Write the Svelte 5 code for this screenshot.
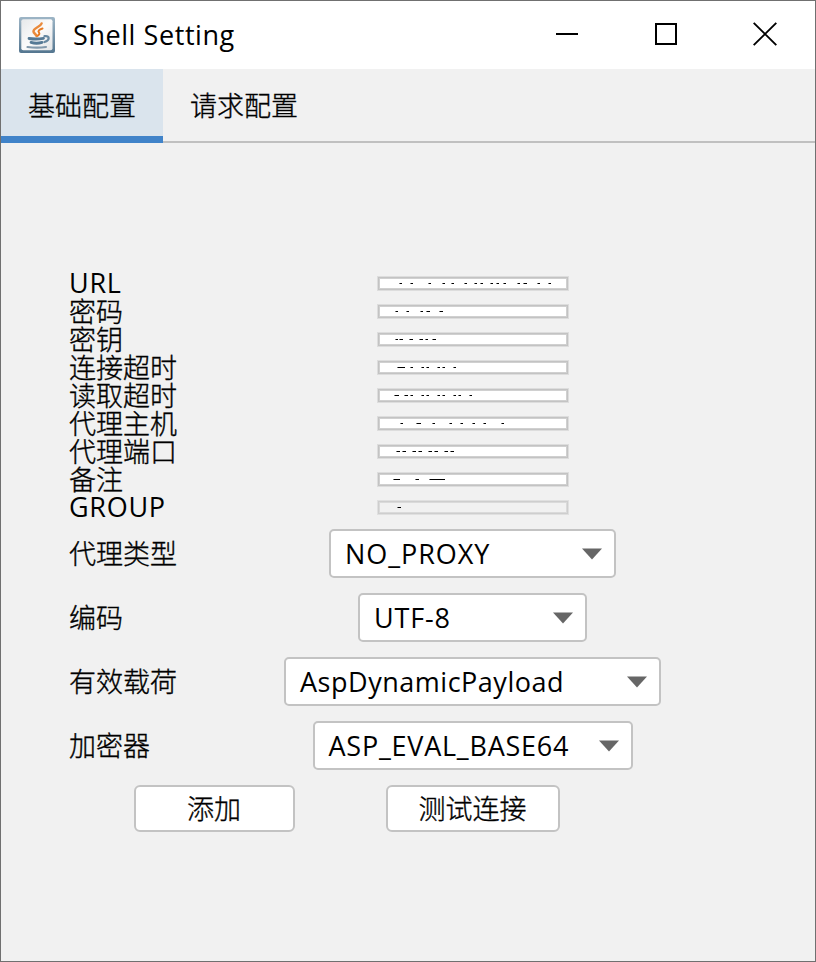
<script>
  const tabs = ['基础配置', '请求配置'];

  // Each mark is [offset, length] in pixels inside the collapsed text field.
  const fields = [
    { label: 'URL', latin: true, marks: [[19, 3], [30, 3], [48, 3], [62, 3], [71, 3], [84, 3], [94, 3], [100, 3], [110, 3], [116, 3], [123, 3], [137, 3], [143, 4], [157, 3], [168, 3]] },
    { label: '密码', marks: [[15, 3], [26, 3], [40, 3], [46, 4], [59, 4]] },
    { label: '密钥', marks: [[15, 3], [19, 4], [29, 4], [39, 4], [45, 3], [52, 4]] },
    { label: '连接超时', marks: [[17, 8], [30, 3], [41, 3], [46, 3], [57, 3], [62, 3], [73, 3]] },
    { label: '读取超时', marks: [[14, 5], [24, 4], [30, 3], [41, 3], [46, 3], [57, 3], [62, 3], [73, 3], [78, 3], [89, 3]] },
    { label: '代理主机', marks: [[20, 3], [36, 5], [52, 3], [69, 3], [80, 3], [92, 3], [103, 3], [121, 3]] },
    { label: '代理端口', marks: [[16, 4], [22, 4], [32, 4], [38, 4], [48, 4], [54, 4], [64, 4], [70, 4]] },
    { label: '备注', marks: [[13, 7], [35, 4], [49, 16]] },
    { label: 'GROUP', latin: true, marks: [[17, 4]], disabled: true }
  ];

  const combos = [
    { label: '代理类型', value: 'NO_PROXY', width: 287, tracking: 0.95 },
    { label: '编码', value: 'UTF-8', width: 229, tracking: 0.8 },
    { label: '有效载荷', value: 'AspDynamicPayload', width: 377, tracking: 0.52 },
    { label: '加密器', value: 'ASP_EVAL_BASE64', width: 320, tracking: 0.77 }
  ];
</script>

<div class="window">
  <header>
    <svg class="java" width="36" height="36" viewBox="0 0 36 36">
      <defs>
        <linearGradient id="edge" x1="0" y1="0" x2="0" y2="1">
          <stop offset="0" stop-color="#9db5c6" /><stop offset="1" stop-color="#547690" />
        </linearGradient>
        <linearGradient id="face" x1="0" y1="0" x2="1" y2="1">
          <stop offset="0" stop-color="#e6e8ea" /><stop offset=".5" stop-color="#fbfbfb" /><stop offset="1" stop-color="#e2e4e6" />
        </linearGradient>
      </defs>
      <rect width="36" height="36" rx="2" fill="url(#edge)" />
      <rect x="2.3" y="2.3" width="31.2" height="31" rx="2" fill="url(#face)" />
      <g fill="none" stroke-linecap="round">
        <path d="M22.6 6.5C21.5 10 14 11 14.5 14.5C14.7 16.4 17 17 17.5 19" stroke="#e98a3c" stroke-width="2.5" />
        <path d="M23.5 11.5C20 12.5 18.6 14 20 15.5C21 16.8 20 18 18.5 18.8" stroke="#e67a23" stroke-width="2" />
        <path d="M10 21.5C14 22.1 20 22.1 24.5 21.3M12 25.4C15 26.3 20 26.3 23 25.4" stroke="#557995" stroke-width="2.8" />
        <path d="M25.5 19.2C31 18 31 23.5 25.5 25" stroke="#6788a1" stroke-width="2.3" />
        <path d="M8.5 30C14 30.6 22 30.6 27 30" stroke="#8198ab" stroke-width="2.2" />
      </g>
    </svg>
    <h1>Shell Setting</h1>
    <svg class="controls" width="222" height="24" viewBox="0 0 222 24" fill="none" stroke="#000" stroke-width="2">
      <path d="M0 12H22" />
      <rect x="100" y="2" width="20" height="20" />
      <path d="M197.7 .8L220.3 23.2M220.3 .8L197.7 23.2" stroke-width="1.9" />
    </svg>
  </header>

  <nav>
    {#each tabs as tab, i}
      <div class="tab" class:active={i === 0}>{tab}</div>
    {/each}
  </nav>

  <main>
    {#each fields as f}
      <div class="row">
        <span class="label" class:latin={f.latin}>{f.label}</span>
        <div class="cell">
          <div class="field" class:disabled={f.disabled}>
            <svg width="186" height="9" viewBox="0 0 186 9" shape-rendering="crispEdges">
              {#each f.marks as [x, w]}
                <rect {x} y="4" width={w} height="1" fill="#777" />
                <rect x={x + 1} y="4" width={w - 1.5} height="1" fill="#000" />
              {/each}
            </svg>
          </div>
        </div>
      </div>
    {/each}

    {#each combos as c}
      <div class="row tall">
        <span class="label">{c.label}</span>
        <div class="cell">
          <div class="combo" style="width: {c.width}px">
            <span style="letter-spacing: {c.tracking}px">{c.value}</span>
            <svg width="20" height="12" viewBox="0 0 20 12"><path d="M0 .5H20L10 11.5Z" fill="#666" /></svg>
          </div>
        </div>
      </div>
    {/each}

    <div class="actions">
      <button class="add">添加</button>
      <button class="test">测试连接</button>
    </div>
  </main>
</div>

<style>
  :global(body) { margin: 0; }
  .window {
    box-sizing: border-box;
    width: 816px;
    height: 962px;
    border: 1px solid #707070;
    background: #f1f1f1;
    color: #000;
    font: 27px/28px "Open Sans", "Noto Sans CJK SC", sans-serif;
    overflow: hidden;
  }
  header {
    display: flex;
    align-items: center;
    height: 68px;
    padding: 0 37px 0 18px;
    background: #fff;
  }
  h1 {
    flex: 1;
    margin: 0 0 0 18px;
    font-size: 27px;
    font-weight: 400;
    letter-spacing: 0.57px;
  }
  .controls { margin-bottom: 2px; }
  nav {
    display: flex;
    height: 74px;
    box-sizing: border-box;
    box-shadow: inset 0 -2px #c0c0c0;
  }
  .tab {
    box-sizing: border-box;
    width: 162px;
    height: 74px;
    line-height: 72px;
    text-align: center;
  }
  .tab, .label, button {
    font-family: "Noto Sans CJK SC", sans-serif;
    font-weight: 300;
    -webkit-text-stroke: 0.35px #000;
  }
  .active {
    background: #dae4ed;
    border-bottom: 7px solid #4083c9;
  }
  main { padding: 127px 0 0 68px; }
  .row {
    display: grid;
    grid-template-columns: 215px 377px;
    height: 28px;
    box-sizing: border-box;
    align-items: center;
  }
  .label {
    margin: -1px 0 1px;
    white-space: nowrap;
  }
  .label.latin {
    font-family: "Open Sans", sans-serif;
    font-weight: 400;
    letter-spacing: 0.7px;
    -webkit-text-stroke: 0;
  }
  .cell { display: flex; justify-content: center; }
  .field {
    width: 186px;
    height: 9px;
    margin-top: -1px;
    border: 1px solid #d0d0d0;
    outline: 1px solid #c3c3c3;
    box-shadow: 0 0 0 2px #dddddd;
    background: #fff;
  }
  .field svg { display: block; }
  .disabled {
    background: #f1f1f1;
    border-color: #dadada;
    outline-color: #cecece;
    box-shadow: 0 0 0 2px #e0e0e0;
  }
  .tall { height: 64px; padding-bottom: 1px; }
  .combo {
    box-sizing: border-box;
    display: flex;
    align-items: center;
    justify-content: space-between;
    height: 49px;
    padding: 0 12px 0 14px;
    border: 2px solid #c3c3c3;
    border-radius: 5px;
    background: #fff;
    white-space: nowrap;
  }
  .actions {
    display: flex;
    gap: 91px;
    padding: 7px 0 0 65px;
  }
  button {
    box-sizing: border-box;
    height: 47px;
    padding: 0 1px 2px 0;
    border: 2px solid #c3c3c3;
    border-radius: 6px;
    background: #fff;
    color: #000;
    font-size: 27px;
    line-height: 40px;
  }
  .add { width: 161px; }
  .test { width: 174px; }
</style>
